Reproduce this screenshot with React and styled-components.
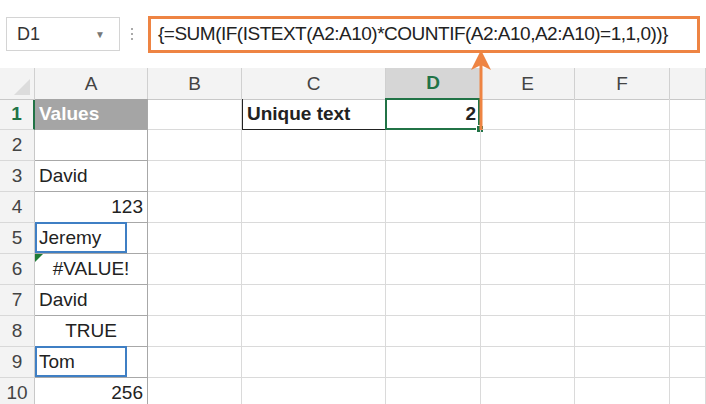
import React from 'react';
import styled, { createGlobalStyle } from 'styled-components';

const Global = createGlobalStyle`
  body { margin: 0; background: #fff; font-family: "Liberation Sans", Arial, sans-serif; overflow: hidden; }
`;

const Page = styled.div`
  width: 706px;
  height: 404px;
  position: relative;
  overflow: hidden;
  background: #fff;
`;

const Bar = styled.div`
  display: flex;
  align-items: center;
  height: 68px;
  padding: 0 6px;
`;

const NameBox = styled.div`
  width: 114px;
  height: 34px;
  box-sizing: border-box;
  border: 1px solid #d4d4d4;
  display: flex;
  align-items: center;
  justify-content: space-between;
  padding: 0 14px 0 10px;
  font-size: 18px;
  color: #333;
`;

const Caret = styled.span`
  font-size: 10px;
  color: #777;
`;

const Dots = styled.div`
  width: 24px;
  margin-right: 4px;
  display: flex;
  flex-direction: column;
  align-items: center;
  gap: 3px;
`;

const Dot = styled.span`
  width: 2px;
  height: 2px;
  background: #aaa;
`;

const Formula = styled.div`
  flex: 1;
  height: 37px;
  box-sizing: border-box;
  border: 3px solid #ee8443;
  display: flex;
  align-items: center;
  padding-left: 7px;
  font-size: 19px;
  letter-spacing: -0.5px;
  color: #222;
  white-space: nowrap;
  overflow: hidden;
`;

const cols = '35px 113px 94px 144px 95px 94px 95px 36px';

const Grid = styled.div`
  display: grid;
  grid-template-columns: ${cols};
  grid-auto-rows: 31px;
`;

const ColHead = styled.div`
  height: 32px;
  background: ${p => (p.$active ? '#d6d6d6' : '#f3f3f3')};
  border-right: 1px solid #d0d0d0;
  border-bottom: ${p => (p.$active ? '2px solid #217346' : '1px solid #c8c8c8')};
  box-sizing: border-box;
  display: flex;
  align-items: center;
  justify-content: center;
  font-size: 19px;
  color: ${p => (p.$active ? '#217346' : '#444')};
  font-weight: ${p => (p.$active ? 'bold' : 'normal')};
  position: relative;
`;

const Corner = styled(ColHead)`
  &::after {
    content: '';
    position: absolute;
    right: 4px;
    bottom: 4px;
    border-left: 16px solid transparent;
    border-bottom: 16px solid #dcdcdc;
  }
`;

const RowHead = styled.div`
  background: #f3f3f3;
  border-right: ${p => (p.$active ? '2px solid #217346' : '1px solid #c8c8c8')};
  border-bottom: 1px solid #d8d8d8;
  box-sizing: border-box;
  display: flex;
  align-items: center;
  justify-content: center;
  font-size: 19px;
  color: ${p => (p.$active ? '#217346' : '#444')};
  font-weight: ${p => (p.$active ? 'bold' : 'normal')};
`;

const Cell = styled.div`
  border-right: 1px solid ${p => (p.$colA ? '#a8a8a8' : '#dadada')};
  border-bottom: 1px solid ${p => (p.$colA ? '#a8a8a8' : '#dadada')};
  box-sizing: border-box;
  display: flex;
  align-items: center;
  justify-content: ${p => p.$align || 'flex-start'};
  padding: 0 4px;
  font-size: 19px;
  color: #222;
  position: relative;
  background: ${p => p.$bg || 'transparent'};
  font-weight: ${p => (p.$bold ? 'bold' : 'normal')};
`;

const Outline = styled.div`
  position: absolute;
  left: 0;
  top: -1px;
  width: 92px;
  bottom: 0;
  border: 2px solid #3f7fc4;
  box-sizing: border-box;
`;

const ErrorTri = styled.div`
  position: absolute;
  left: 0;
  top: 0;
  border-top: 8px solid #1e7b34;
  border-right: 8px solid transparent;
`;

const Selected = styled.div`
  position: absolute;
  inset: -1px 0 -1px -1px;
  border: 2px solid #217346;
`;

const Handle = styled.div`
  position: absolute;
  right: -4px;
  bottom: -4px;
  width: 6px;
  height: 6px;
  background: #217346;
  border: 1px solid #fff;
`;

const Arrow = styled.svg`
  position: absolute;
  left: 470px;
  top: 50px;
`;

const rows = [
  ['Values'], [''], ['David'], ['123', 'flex-end'], ['Jeremy', null, 'box'],
  ['#VALUE!', 'center', 'err'], ['David'], ['TRUE', 'center'], ['Tom', null, 'box'], ['256', 'flex-end'],
];

export default function App() {
  const letters = ['A', 'B', 'C', 'D', 'E', 'F', ''];
  return (
    <Page>
      <Global />
      <Bar>
        <NameBox>D1<Caret>▼</Caret></NameBox>
        <Dots><Dot /><Dot /><Dot /></Dots>
        <Formula>{'{=SUM(IF(ISTEXT(A2:A10)*COUNTIF(A2:A10,A2:A10)=1,1,0))}'}</Formula>
      </Bar>
      <Grid>
        <Corner />
        {letters.map(l => <ColHead key={l} $active={l === 'D'}>{l}</ColHead>)}
        {rows.map(([text, align, kind], i) => (
          <React.Fragment key={i}>
            <RowHead $active={i === 0}>{i + 1}</RowHead>
            <Cell $colA $align={align} $bg={i === 0 ? '#a5a5a5' : undefined} style={i === 0 ? { color: '#fff', fontWeight: 'bold' } : undefined}>
              {kind === 'box' && <Outline />}
              {kind === 'err' && <ErrorTri />}
              {text}
            </Cell>
            <Cell />
            {i === 0 ? (
              <Cell $bold style={{ borderLeft: '1.5px solid #222', borderBottom: '1.5px solid #222', borderRight: 'none' }}>Unique text</Cell>
            ) : <Cell />}
            {i === 0 ? (
              <Cell $bold $align="flex-end"><Selected /><Handle />2</Cell>
            ) : <Cell />}
            <Cell />
            <Cell />
            <Cell />
          </React.Fragment>
        ))}
      </Grid>
      <Arrow width="22" height="82" viewBox="0 0 22 82">
        <line x1="11" y1="14" x2="11" y2="80" stroke="#ee8443" strokeWidth="3" />
        <polygon points="11,0 1,20 11,15 21,20" fill="#ee8443" />
      </Arrow>
    </Page>
  );
}
